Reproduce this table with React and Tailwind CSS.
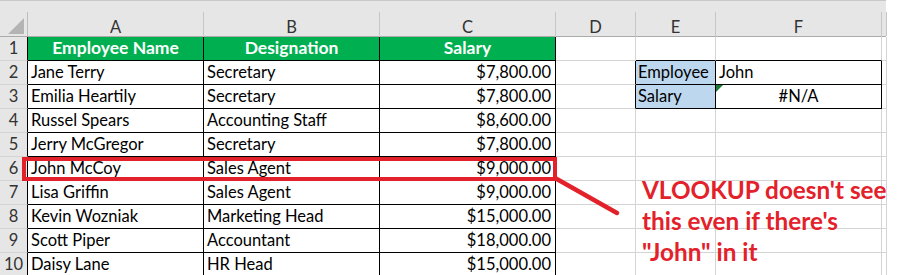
import React from 'react'

const cols = [
  { key: 'A', w: 'w-[176px]' },
  { key: 'B', w: 'w-[176px]' },
  { key: 'C', w: 'w-[176px]' },
  { key: 'D', w: 'w-[80px]' },
  { key: 'E', w: 'w-[80px]' },
  { key: 'F', w: 'w-[166px]' },
  { key: 'G', w: 'w-[5px]' },
]

const employees = [
  ['Jane Terry', 'Secretary', '$7,800.00'],
  ['Emilia Heartily', 'Secretary', '$7,800.00'],
  ['Russel Spears', 'Accounting Staff', '$8,600.00'],
  ['Jerry McGregor', 'Secretary', '$7,800.00'],
  ['John McCoy', 'Sales Agent', '$9,000.00'],
  ['Lisa Griffin', 'Sales Agent', '$9,000.00'],
  ['Kevin Wozniak', 'Marketing Head', '$15,000.00'],
  ['Scott Piper', 'Accountant', '$18,000.00'],
  ['Daisy Lane', 'HR Head', '$15,000.00'],
]

function Cell({ w, right = 'border-r-[#d4d4d4]', bottom = 'border-b-[#d4d4d4]', className = '', children }) {
  return (
    <div className={`${w} h-full shrink-0 border-r border-b ${right} ${bottom} flex items-center overflow-hidden whitespace-nowrap ${className}`}>
      {children}
    </div>
  )
}

function RowHeader({ n, dark }) {
  return (
    <div className={`w-[28px] h-full shrink-0 bg-[#e6e6e6] border-r border-b border-b-[#d4d4d4] ${dark ? 'border-r-black' : 'border-r-[#bcbcbc]'} flex items-center justify-center text-[16.5px] text-[#333]`}>
      {n}
    </div>
  )
}

function Row({ n, children }) {
  return (
    <div className="flex h-[24px]">
      <RowHeader n={n} dark />
      {children}
    </div>
  )
}

export default function App() {
  return (
    <div className="relative w-[898px] h-[275px] overflow-hidden bg-white" style={{ fontFamily: 'Lato, "Open Sans", sans-serif' }}>
      {/* column headers */}
      <div className="flex h-[37px] w-[886px] bg-[#e6e6e6] border-t border-t-[#c8c8c8] border-b border-b-[#ababab]">
        <div className="w-[28px] shrink-0 flex flex-col pt-[11px]">
          <div className="flex-1 border-r border-r-[#bcbcbc] relative">
            <svg className="absolute left-[8px] top-[6px]" width="16" height="16" viewBox="0 0 16 16">
              <polygon points="16,0 16,16 0,16" fill="#b4b4b4" />
            </svg>
          </div>
        </div>
        {cols.map((c) => (
          <div key={c.key} className={`${c.w} shrink-0 flex flex-col pt-[11px]`}>
            <div className="flex-1 border-r border-r-[#c6c6c6] flex items-center justify-center pt-[3px] text-[16.5px] text-[#333]">
              {c.key !== 'G' && c.key}
            </div>
          </div>
        ))}
      </div>

      {/* row 1 */}
      <div className="flex h-[24px]">
        <RowHeader n={1} dark />
        <Cell w="w-[176px]" right="border-r-black" bottom="border-b-black" className="bg-[#00b050] justify-center text-white font-bold text-[17.5px]">Employee Name</Cell>
        <Cell w="w-[176px]" right="border-r-black" bottom="border-b-black" className="bg-[#00b050] justify-center text-white font-bold text-[17.5px]">Designation</Cell>
        <Cell w="w-[176px]" right="border-r-black" bottom="border-b-black" className="bg-[#00b050] justify-center text-white font-bold text-[17.5px]">Salary</Cell>
        <Cell w="w-[80px]" />
        <Cell w="w-[80px]" bottom="border-b-black" />
        <Cell w="w-[166px]" bottom="border-b-black" />
        <Cell w="w-[5px]" />
      </div>

      {employees.map((e, i) => {
        const n = i + 2
        return (
          <Row key={n} n={n}>
            <Cell w="w-[176px]" right="border-r-black" bottom="border-b-black" className="pl-[3px] text-[16.5px] text-black">{e[0]}</Cell>
            <Cell w="w-[176px]" right="border-r-black" bottom="border-b-black" className="pl-[3px] text-[16.5px] text-black">{e[1]}</Cell>
            <Cell w="w-[176px]" right="border-r-black" bottom="border-b-black" className="justify-end pr-[4px] text-[16.5px] text-black">{e[2]}</Cell>
            {n === 2 || n === 3 ? (
              <>
                <Cell w="w-[80px]" right="border-r-black" />
                <Cell w="w-[80px]" right="border-r-black" bottom="border-b-black" className="bg-[#bdd7ee] pl-[2px] text-[16.5px] text-black">
                  {n === 2 ? 'Employee' : 'Salary'}
                </Cell>
                <Cell w="w-[166px]" right="border-r-black" bottom="border-b-black" className={`relative text-[16.5px] text-black ${n === 2 ? 'pl-[3px]' : 'justify-center'}`}>
                  {n === 3 && (
                    <svg className="absolute left-0 top-0" width="7" height="7" viewBox="0 0 7 7">
                      <polygon points="0,0 7,0 0,7" fill="#1e7b34" />
                    </svg>
                  )}
                  {n === 2 ? 'John' : '#N/A'}
                </Cell>
              </>
            ) : (
              <>
                <Cell w="w-[80px]" />
                <Cell w="w-[80px]" />
                <Cell w="w-[166px]" />
              </>
            )}
            <Cell w="w-[5px]" />
          </Row>
        )
      })}

      {/* annotation: highlight box around row 6 */}
      <div className="absolute left-[22px] top-[157px] w-[535px] h-[24px] border-[4px] border-[#e3212a]" />
      <svg className="absolute left-0 top-0 pointer-events-none" width="898" height="275">
        <line x1="555" y1="178" x2="617" y2="213" stroke="#e3212a" strokeWidth="4.5" strokeLinecap="round" />
      </svg>
      <div className="absolute left-[642px] top-[174px] text-[#e3212a] font-bold text-[24.3px] leading-[31px] whitespace-nowrap">
        <div>VLOOKUP doesn't see</div>
        <div>this even if there's</div>
        <div>"John" in it</div>
      </div>
    </div>
  )
}
